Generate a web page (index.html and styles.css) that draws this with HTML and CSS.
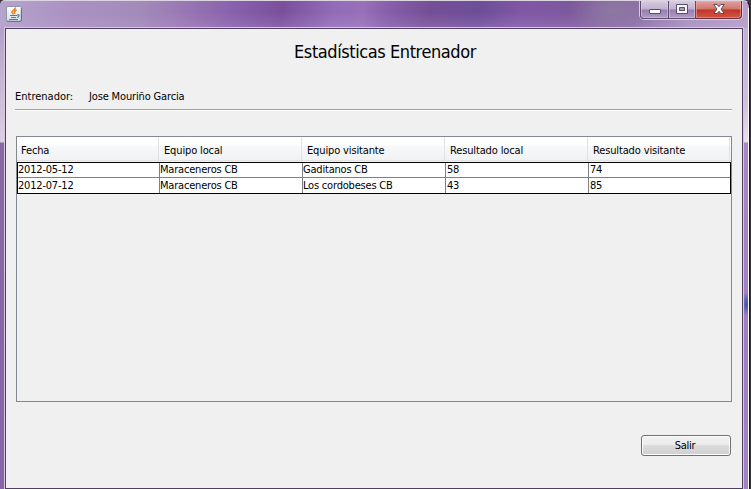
FILE: index.html
```html
<!DOCTYPE html>
<html lang="es">
<head>
<meta charset="utf-8">
<title>Estadísticas Entrenador</title>
<link rel="stylesheet" href="styles.css">
</head>
<body>
<div class="window">
  <header class="titlebar">
    <svg class="java" width="16" height="16" viewBox="0 0 16 16">
      <defs><linearGradient id="tile" x2="0" y2="1"><stop stop-color="#fff"/><stop offset="1" stop-color="#d3dbe3"/></linearGradient></defs>
      <rect x=".5" y=".5" width="15" height="15" rx="1.5" fill="url(#tile)" stroke="#8b98ae"/>
      <path d="M1 15.3h14M15.3 2v13" stroke="#52708d" fill="none"/>
      <path d="M9 1.500C10.500 4 5 4.500 6 6.500C6.500 7.500 7.500 7.500 7 8.500M10.500 4C8 5.500 8 6 9 8" fill="none" stroke="#ee7c22" stroke-width="1.500"/>
      <path d="M4 9.500h7M5 11.500h5M3 13.500h9M11 9c3-1 2.500 2 0 2.500" fill="none" stroke="#547d98" stroke-width="1.200"/>
    </svg>
    <div class="controls">
      <span class="ctl min"><svg width="12" height="5" viewBox="0 0 12 5"><rect x=".5" y=".5" width="11" height="4" rx=".5" fill="#fff" stroke="#555066"/></svg></span>
      <span class="ctl max"><svg width="12" height="10" viewBox="0 0 12 10"><path d="M.5.5h11v9H.5z" fill="#f8f6fa" stroke="#555066"/><path d="M3.500 3.500h5v3h-5z" fill="#a99abb" stroke="#555066"/></svg></span>
      <span class="ctl close"><svg width="12" height="10" viewBox="0 0 12 10"><path d="M.7.500h3.500L6 2.700 7.800.500h3.500L8 5l3.300 4.500H7.800L6 7.300 4.200 9.500H.7L4 5z" fill="#fff" stroke="#594a5c"/></svg></span>
    </div>
  </header>
  <main class="client">
    <h1>Estadísticas Entrenador</h1>
    <div class="trainer"><span class="label">Entrenador:</span><span class="name">Jose Mouriño Garcia</span></div>
    <div class="pane">
      <div class="head"><span>Fecha</span><span>Equipo local</span><span>Equipo visitante</span><span>Resultado local</span><span>Resultado visitante</span></div>
      <div class="rows">
        <div class="row"><span>2012-05-12</span><span>Maraceneros CB</span><span>Gaditanos CB</span><span>58</span><span>74</span></div>
        <div class="row"><span>2012-07-12</span><span>Maraceneros CB</span><span>Los cordobeses CB</span><span>43</span><span>85</span></div>
      </div>
    </div>
    <button class="exit">Salir</button>
  </main>
</div>
</body>
</html>
```

FILE: styles.css
```css
* { box-sizing: border-box; }
body {
  margin: 0;
  height: 489px;
  overflow: hidden;
  background: #39343d;
  font: 11px/14px "DejaVu Sans Condensed", "DejaVu Sans", sans-serif;
  font-stretch: condensed;
  letter-spacing: -0.2px;
  color: #000;
}
.window {
  width: 750px;
  height: 489px;
  padding: 0 5px 0 4px;
  border-top: 1px solid #dcd3e3;
  border-right: 1px solid #15111a;
  border-radius: 5px 7px 0 0;
  background:
    linear-gradient(#fff, #fff) 748px 7px / 1px 482px no-repeat,
    radial-gradient(ellipse 7px 12px at 747px 303px, #3454b4, transparent) ,
    linear-gradient(transparent 27px, #c3b0d5 27px, #d0bfdc 100px, #e9dfed 141px, #a888c0 142px, #a27fbc 340px, #a482bd 100%) 744px 0 / 4px 489px no-repeat,
    linear-gradient(transparent 27px, #b5a0c8 27px, #dccfe2 141px, #8a67a3 142px, #8963a8 100%) 0 0 / 4px 489px no-repeat,
    radial-gradient(ellipse 45px 24px at 612px 10px, #8e78a3, transparent),
    linear-gradient(transparent 12px, #c4addb38 27px),
    linear-gradient(100deg, #b6a4cc 0, #aa91c2 70px, #a28bb9 140px, #9a78b4 180px, #875fab 235px, #7a509b 280px, #936cb8 330px, #9870b8 360px, #865eaa 385px, #754f96 425px, #6e4e99 475px, #8057a5 515px, #7d589d 570px, #8b70a5 630px, #a993be 680px, #baa4cf 750px);
}
.titlebar {
  height: 26px;
  display: flex;
  justify-content: space-between;
}
.java { margin: 5px 0 0 2px; display: block; }
.controls {
  display: flex;
  width: 104px;
  height: 19px;
  margin-right: 1px;
  border: 1px solid #d9cce4;
  border-top: 0;
  border-radius: 0 0 5px 5px;
}
.ctl {
  display: flex;
  justify-content: center;
  align-items: center;
  padding-bottom: 1px;
  border: 1px solid #5b496c;
  border-top: 0;
  background: linear-gradient(#d5cbdd, #c1b1cf 8px, #967db0 9px, #b19bc6);
  box-shadow: inset 0 0 0 1px #ddd0e788;
}
.min { width: 29px; border-radius: 0 0 0 4px; padding: 4px 0 0; }
.max { width: 27px; border-left: 0; }
.close {
  width: 46px;
  border-left: 0;
  border-color: #632c3a;
  border-radius: 0 0 4px 0;
  background: radial-gradient(ellipse 24px 10px at 50% 15px, #d6462c, transparent), linear-gradient(#dfa29d, #d17870 8px, #b83127 9px, #c76056);
  box-shadow: inset 0 0 0 1px #f1b2a988;
}
.client {
  height: 461px;
  display: flex;
  flex-direction: column;
  padding: 9px 10px 0;
  background: #f0f0f0;
  border: 1px solid #513e63;
  outline: 1px solid #d6c8e0;
  margin: 1px 1px 0;
}
h1 {
  margin: 0;
  font-size: 18px;
  font-weight: 400;
  line-height: 28px;
  letter-spacing: -0.42px;
  text-align: center;
  padding-left: 22px;
}
.trainer {
  display: flex;
  width: 717px;
  height: 44px;
  margin-left: -1px;
  padding-top: 24px;
  border-bottom: 1px solid #a0a0a0;
  box-shadow: 0 1px #fff;
}
.label { width: 74px; letter-spacing: 0; }
.name { letter-spacing: -0.15px; }
.pane {
  width: 716px;
  height: 266px;
  margin-top: 26px;
  border: 1px solid #828790;
}
.head {
  display: grid;
  grid-template-columns: 142px repeat(3, 143px) 142px;
  height: 25px;
  background: linear-gradient(#fff 8px, #f7f8fa 9px, #f1f2f4 23px, #d5d5d5 24px, #f2f2f2 24px);
  letter-spacing: -0.14px;
}
.head span {
  padding: 7px 0 0 5px;
  border-right: 1px solid #e0e2e5;
}
.head span:first-child { padding-left: 4px; }
.rows {
  border: 1px solid #000;
  background: #fff;
  width: 714px;
}
.row {
  display: grid;
  grid-template-columns: 142px repeat(3, 143px) 141px;
  height: 14px;
  line-height: 13px;
}
.row + .row { height: 16px; border-top: 1px solid #808080; line-height: 15px; }
.row span { border-right: 1px solid #808080; }
.row span:nth-child(n+4) { padding-left: 1px; }
.row span:last-child { border: 0; }
.exit {
  align-self: flex-end;
  width: 90px;
  height: 21px;
  margin: 33px 1px 0 0;
  padding: 0 2px 0 0;
  border: 1px solid #707070;
  border-radius: 3px;
  background: linear-gradient(#f2f2f2, #ebebeb 9px, #dddddd 9px, #cfcfcf);
  box-shadow: inset 0 0 0 1px #fbfbfb;
  font: inherit;
  letter-spacing: -0.3px;
  color: #000;
}
```
